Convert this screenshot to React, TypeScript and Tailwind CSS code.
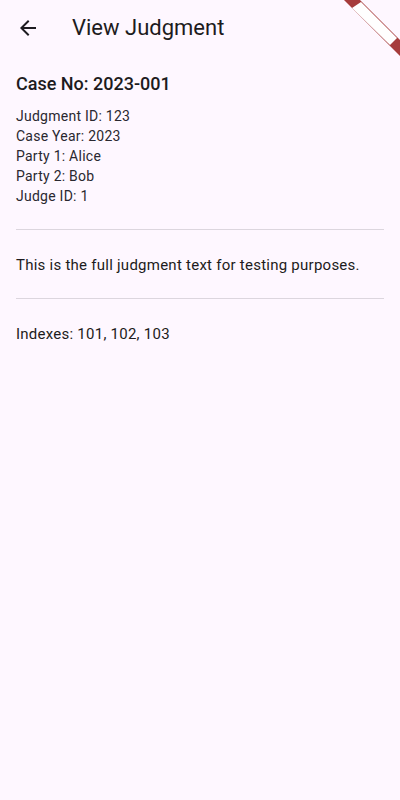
import React from "react";

export default function App() {
  const details = [
    "Judgment ID: 123",
    "Case Year: 2023",
    "Party 1: Alice",
    "Party 2: Bob",
    "Judge ID: 1",
  ];

  return (
    <div
      className="relative w-[400px] h-[800px] overflow-hidden bg-[#fef7ff] text-[#1d1b20]"
      style={{ fontFamily: "Roboto, 'Noto Sans', sans-serif" }}
    >
      {/* app bar */}
      <div className="flex items-center h-14 px-4">
        <svg width="24" height="24" viewBox="0 0 24 24" fill="#1d1b20">
          <path d="M20 11H7.83l5.59-5.59L12 4l-8 8 8 8 1.41-1.41L7.83 13H20v-2z" />
        </svg>
        <h1 className="ml-8 text-[22px] leading-7 font-normal">View Judgment</h1>
      </div>

      {/* body */}
      <div className="px-4">
        <h2 className="mt-4 text-[18px] leading-6 font-medium">Case No: 2023-001</h2>
        <div className="mt-[10px] text-sm leading-5 tracking-[0.25px] text-[#2a2830]">
          {details.map((d) => (
            <p key={d}>{d}</p>
          ))}
        </div>

        <div className="mt-[23px] h-px bg-[#dcd6de]" />
        <p className="mt-[23px] text-[15px] leading-6 tracking-[0.25px] whitespace-nowrap">
          This is the full judgment text for testing purposes.
        </p>
        <div className="mt-[21px] h-px bg-[#dcd6de]" />
        <p className="mt-[23px] text-[15px] leading-6 tracking-[0.25px]">Indexes: 101, 102, 103</p>
      </div>

      {/* debug banner */}
      <svg className="absolute top-0 right-0" width="56" height="56" viewBox="0 0 56 56">
        <polygon points="0,0 16,0 56,40 56,56" fill="#a63c3c" />
        <polygon points="8,8 17,2 53,38 46,45" fill="#ffffff" />
      </svg>
    </div>
  );
}
